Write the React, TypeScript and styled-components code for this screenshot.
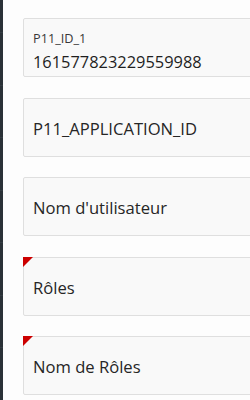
import React from "react";
import styled, { createGlobalStyle } from "styled-components";

const GlobalStyle = createGlobalStyle`
  html, body {
    margin: 0;
    padding: 0;
    background: #ffffff;
    overflow: hidden;
  }
  body {
    font-family: "Open Sans", "Noto Sans", sans-serif;
    color: #262626;
  }
`;

const Page = styled.div`
  display: flex;
  width: 250px;
  height: 400px;
  overflow: hidden;
  background: #fdfdfd;
`;

const Sidebar = styled.nav`
  flex: 0 0 3px;
  background: #2a3137;
  display: flex;
  flex-direction: column;
  padding-top: 32px;
`;

const SideItem = styled.div`
  height: 55px;
  border-top: 1px solid #343c42;
`;

const Content = styled.main`
  flex: 1;
  display: flex;
  flex-direction: column;
  gap: 20.5px;
  padding: 18px 0 0 20px;
  overflow: hidden;
`;

const Card = styled.div<{ $filled?: boolean }>`
  position: relative;
  box-sizing: border-box;
  flex: 0 0 59px;
  width: 300px;
  background: #f9f9f9;
  border: 1px solid #dfdfdf;
  border-radius: 2px;
  display: flex;
  flex-direction: column;
  padding: ${(p) => (p.$filled ? "11px 0 0 9px" : "19px 0 0 9px")};
`;

const Required = styled.span`
  position: absolute;
  top: -1px;
  left: -1px;
  width: 0;
  height: 0;
  border-top: 10px solid #cc0000;
  border-right: 10px solid transparent;
`;

const Label = styled.div`
  font-size: 12.7px;
  line-height: 16px;
  color: #383838;
`;

const Value = styled.div`
  font-size: 16.4px;
  line-height: 22px;
  margin-top: 5px;
  color: #1f1f1f;
`;

const Placeholder = styled.div`
  font-size: 16.6px;
  line-height: 22px;
  color: #262626;
`;

const fields = [
  { label: "P11_APPLICATION_ID", required: false },
  { label: "Nom d'utilisateur", required: false },
  { label: "Rôles", required: true },
  { label: "Nom de Rôles", required: true },
];

export default function App() {
  return (
    <>
      <GlobalStyle />
      <Page>
        <Sidebar>
          {Array.from({ length: 7 }).map((_, i) => (
            <SideItem key={i} />
          ))}
        </Sidebar>
        <Content>
          <Card $filled>
            <Label>P11_ID_1</Label>
            <Value>161577823229559988</Value>
          </Card>
          {fields.map((f) => (
            <Card key={f.label}>
              {f.required && <Required />}
              <Placeholder>{f.label}</Placeholder>
            </Card>
          ))}
        </Content>
      </Page>
    </>
  );
}
